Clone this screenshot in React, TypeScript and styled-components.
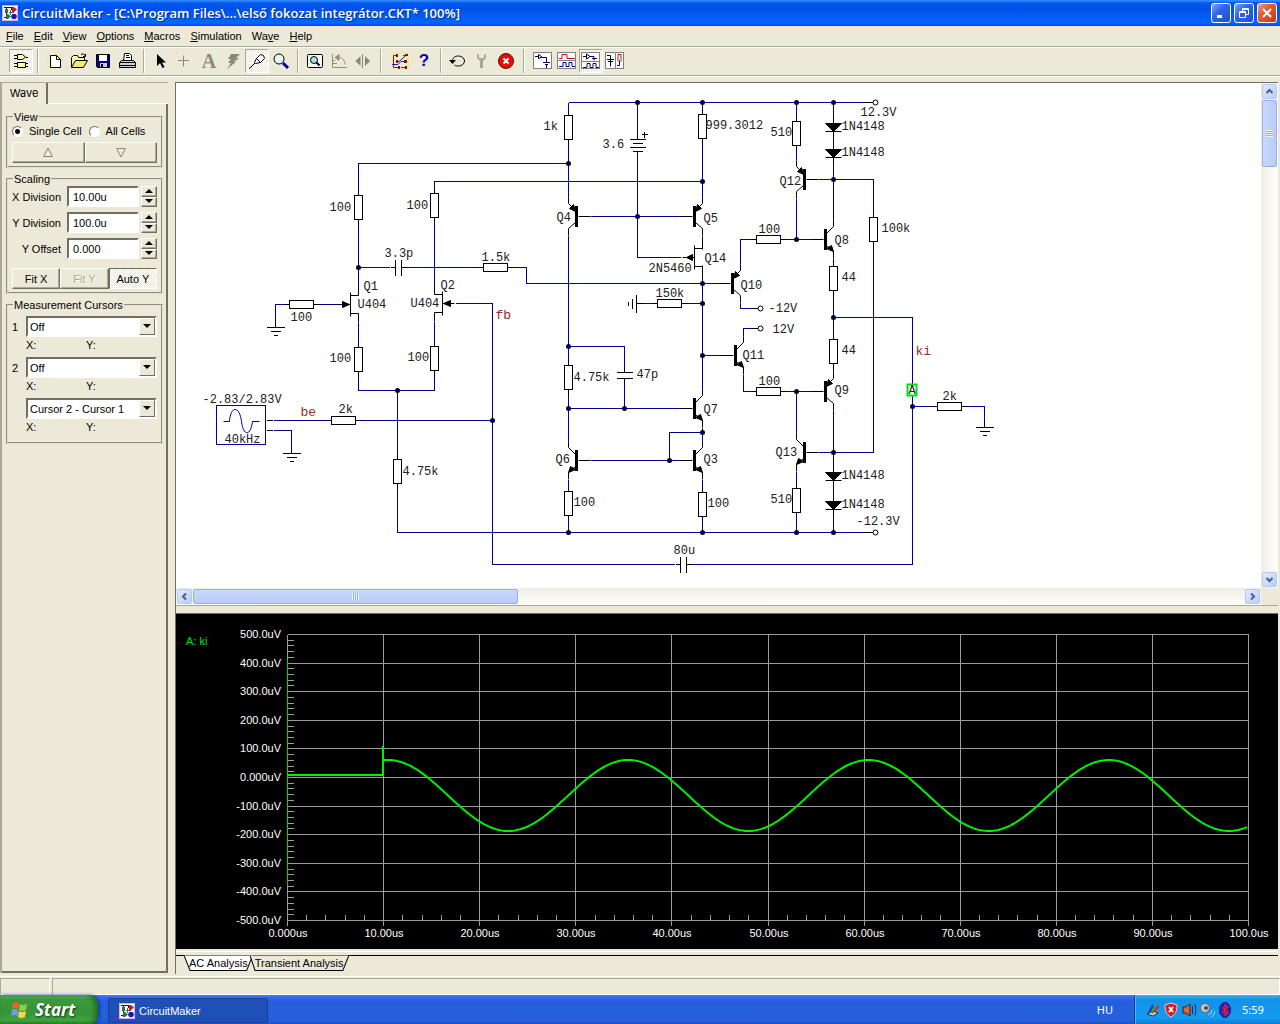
import React from "react";
import styled, { createGlobalStyle, css } from "styled-components";

const FACE = "#ece9d8";
const SHADE = "#aca899";
const DARK = "#716f64";
const WIRE = "#000094";
const UI_FONT = '"Liberation Sans", Arial, sans-serif';
const TAHOMA = '"Noto Sans", Tahoma, sans-serif';

const Global = createGlobalStyle`
  * { box-sizing: border-box; }
  body { margin: 0; background: ${FACE}; font: 11px/14px ${UI_FONT}; color: #000; }
  button, input, select { font: inherit; color: inherit; margin: 0; }
`;

const checker = css`
  background: repeating-conic-gradient(#fff 0 25%, ${FACE} 0 50%) 0 0 / 2px 2px;
`;

const Window = styled.div`
  display: flex;
  flex-direction: column;
  min-height: 100vh;
`;

/* ---------- title bar ---------- */

const TitleBar = styled.header`
  display: flex;
  align-items: center;
  height: 26px;
  padding: 0 3px 0 2px;
  background: linear-gradient(180deg, #3a93ff 0, #0058ee 12%, #0050e6 35%, #0062fa 75%, #0066ff 90%, #0046d8 100%);
`;

const Title = styled.h1`
  flex: 1;
  margin: 0 0 0 4px;
  font: 600 13px/18px "Open Sans", "Trebuchet MS", sans-serif;
  color: #fff;
  text-shadow: 1px 1px 1px #00308c;
  white-space: nowrap;
  overflow: hidden;
`;

const Caption = styled.div`
  display: flex;
  gap: 3px;
`;

const CaptionButton = styled.button<{ $close?: boolean }>`
  display: flex;
  width: 20px;
  height: 20px;
  padding: 0;
  align-items: center;
  justify-content: center;
  border: 1px solid #fff;
  border-radius: 3px;
  background: ${(p) =>
    p.$close
      ? "linear-gradient(135deg, #f0a083 0, #e25a32 40%, #c6391a 100%)"
      : "linear-gradient(135deg, #7fa6f8 0, #2f66e6 40%, #1c4fd0 100%)"};
`;

/* ---------- menu and toolbar ---------- */

const MenuBar = styled.nav`
  display: flex;
  gap: 10px;
  height: 20px;
  padding: 0 6px;
  align-items: center;
`;

const MenuItem = styled.button`
  padding: 0;
  border: 0;
  background: none;
  font: 11px/14px ${UI_FONT};
`;

const ToolBar = styled.div`
  display: flex;
  align-items: center;
  height: 30px;
  padding-left: 9px;
  border-top: 1px solid ${SHADE};
  border-bottom: 1px solid ${SHADE};
  box-shadow: inset 0 1px #fff, 0 1px #fff;
`;

const ToolButton = styled.button<{ $down?: boolean }>`
  display: flex;
  width: 24px;
  height: 24px;
  padding: 0;
  align-items: center;
  justify-content: center;
  border: 1px solid transparent;
  background: none;
  ${(p) =>
    p.$down &&
    css`
      ${checker}
      border-color: ${SHADE} #fff #fff ${SHADE};
    `}
`;

const ToolGap = styled.span<{ $wide?: boolean }>`
  width: 2px;
  height: 24px;
  margin: 0 ${(p) => (p.$wide ? 6 : 4)}px 0 ${(p) => (p.$wide ? 5 : 4)}px;
  border-left: 1px solid ${SHADE};
  border-right: 1px solid #fff;
`;

/* ---------- wave panel ---------- */

const Body = styled.div`
  display: flex;
  flex: 1;
  min-height: 0;
  padding-top: 6px;
`;

const Side = styled.aside`
  display: flex;
  flex-direction: column;
  width: 168px;
  margin: 0 7px 3px 0;
  border-left: 2px solid ${SHADE};
  border-top: 1px solid ${SHADE};
`;

const SideTabs = styled.div`
  display: flex;
  height: 21px;
`;

const SideTab = styled.button`
  width: 46px;
  padding: 0 0 1px;
  border: 0;
  border-right: 2px solid ${DARK};
  background: none;
  font: 11px/14px "Inter", ${UI_FONT};
`;

const TabRest = styled.span`
  flex: 1;
  border-bottom: 1px solid #fff;
`;

const SidePage = styled.div`
  flex: 1;
  padding: 6px 3px 0 4px;
  border-right: 2px solid ${DARK};
  border-bottom: 2px solid ${DARK};
`;

const Group = styled.fieldset`
  min-width: 0;
  margin: 0 0 4px;
  padding: 0 4px 3px;
  border: 2px groove #e4e0d0;
`;

const Legend = styled.legend`
  margin-left: 1px;
  padding: 0 1px;
  height: 14px;
`;

const RadioRow = styled.div`
  display: flex;
  gap: 7px;
`;

const RadioLabel = styled.label`
  display: flex;
  align-items: center;
  gap: 6px;
  white-space: nowrap;
`;

const Radio = styled.input`
  appearance: none;
  width: 11px;
  height: 11px;
  border: 1px solid;
  border-color: ${DARK} #fff #fff ${DARK};
  border-radius: 50%;
  background: #fff;
  &:checked {
    background: radial-gradient(circle, #000 0 2px, #fff 3px);
  }
`;

const ButtonRow = styled.div`
  display: flex;
  padding-top: 4px;
`;

const PushButton = styled.button<{ $down?: boolean }>`
  display: flex;
  flex: 1;
  height: 21px;
  padding: 0;
  align-items: center;
  justify-content: center;
  border: 1px solid;
  border-color: #fff ${DARK} ${DARK} #fff;
  box-shadow: inset -1px -1px ${SHADE};
  background: ${FACE};
  white-space: nowrap;
  &:disabled {
    color: ${SHADE};
    text-shadow: 1px 1px #fff;
  }
  ${(p) =>
    p.$down &&
    css`
      ${checker}
      border-color: ${DARK} #fff #fff ${DARK};
      box-shadow: none;
    `}
`;

const Field = styled.div`
  display: flex;
  align-items: center;
  height: 21px;
  margin-bottom: 5px;
`;

const FieldLabel = styled.label`
  width: 54px;
  margin-right: 1px;
  padding-right: 5px;
  text-align: right;
  white-space: nowrap;
`;

const Entry = styled.input`
  flex: 1;
  min-width: 0;
  height: 21px;
  padding: 0 4px;
  border: 2px solid;
  border-color: ${DARK} #fff #fff ${DARK};
  background: #fff;
`;

const Spinner = styled.div`
  display: flex;
  flex-direction: column;
  width: 16px;
  height: 21px;
  margin-left: 2px;
`;

const SpinButton = styled(PushButton)`
  height: 10px;
`;

const CursorList = styled.div`
  padding-top: 4px;
`;

const CursorRow = styled.div`
  display: grid;
  grid-template-columns: 14px 1fr;
  align-items: center;
`;

const Combo = styled.div`
  display: grid;
  height: 21px;
  border: 2px solid;
  border-color: ${DARK} #fff #fff ${DARK};
  background: #fff;
  > * {
    grid-area: 1 / 1;
  }
`;

const ComboSelect = styled.select`
  appearance: none;
  width: 100%;
  padding: 0 18px 0 2px;
  border: 0;
  background: none;
`;

const ComboArrow = styled.span`
  display: flex;
  justify-self: end;
  width: 16px;
  align-items: center;
  justify-content: center;
  border: 1px solid;
  border-color: #fff ${DARK} ${DARK} #fff;
  background: ${FACE};
  pointer-events: none;
`;

const Readout = styled.div`
  display: grid;
  grid-template-columns: 60px 1fr;
  height: 20px;
  padding: 1px 0 0 14px;
`;

/* ---------- workspace ---------- */

const Workspace = styled.main`
  display: flex;
  flex: 1;
  min-width: 0;
  flex-direction: column;
  margin: 0 2px 2px 0;
  border-left: 1px solid ${DARK};
  border-top: 1px solid ${DARK};
`;

const SchematicPane = styled.section`
  display: grid;
  flex: 1;
  min-height: 300px;
  grid-template: minmax(0, 1fr) 17px / minmax(0, 1fr) 17px;
  border-bottom: 1px solid ${SHADE};
`;

const Sheet = styled.div`
  overflow: hidden;
  background: #fff;
`;

const Track = styled.div<{ $across?: boolean }>`
  display: flex;
  flex-direction: ${(p) => (p.$across ? "row" : "column")};
  gap: 1px;
  padding: 1px;
  background: ${(p) => `linear-gradient(${p.$across ? 180 : 90}deg, #eeede5, #fefefb)`};
`;

const ScrollButton = styled.button`
  display: flex;
  flex: none;
  width: 15px;
  height: 15px;
  padding: 0;
  align-items: center;
  justify-content: center;
  border: 1px solid #b4c8f0;
  border-radius: 2px;
  background: linear-gradient(135deg, #e1eafe, #b9cdfa);
`;

const Thumb = styled.div<{ $across?: boolean }>`
  display: flex;
  flex: ${(p) => (p.$across ? "0 0 30%" : "0 0 67px")};
  margin-${(p) => (p.$across ? "right" : "bottom")}: auto;
  align-items: center;
  justify-content: center;
  border: 1px solid #98b0e8;
  border-radius: 2px;
  background: linear-gradient(${(p) => (p.$across ? 180 : 90)}deg, #c9d8fc, #b9cbf8);
`;

const Grip = styled.span<{ $across?: boolean }>`
  width: 7px;
  height: 7px;
  background: repeating-linear-gradient(${(p) => (p.$across ? 90 : 180)}deg, #eef4fe 0 1px, #8cb0f8 1px 2px);
`;

const WavePane = styled.section`
  margin-top: 7px;
  border-top: 1px solid ${DARK};
  background: #000;
`;

const Drawing = styled.svg<{ $fluid?: boolean }>`
  display: block;
  ${(p) => p.$fluid && "width: 100%; height: auto;"}
`;

const SheetTabs = styled.div`
  display: flex;
  height: 23px;
  margin-top: 2px;
  border-top: 1px solid #fff;
`;

const TabStrip = styled.div`
  display: flex;
  flex: 1;
  margin-top: 3px;
  padding-left: 8px;
  border-top: 1px solid #000;
`;

const SheetTab = styled.button`
  display: grid;
  height: 16px;
  margin: -1px -3px 0 0;
  padding: 0;
  border: 0;
  background: none;
  line-height: 16px;
  > * {
    grid-area: 1 / 1;
  }
`;

const TabShape = styled.svg`
  width: 100%;
  height: 16px;
`;

const TabText = styled.span`
  padding: 0 5px;
`;

/* ---------- status bar and taskbar ---------- */

const StatusBar = styled.footer`
  display: flex;
  gap: 2px;
  height: 19px;
  padding-top: 1px;
  border-top: 1px solid #fff;
`;

const StatusCell = styled.div<{ $width?: number }>`
  flex: ${(p) => (p.$width ? `0 0 ${p.$width}px` : "1")};
  border: 1px solid;
  border-color: ${SHADE} #fff #fff ${SHADE};
`;

const TaskBar = styled.div`
  display: flex;
  height: 30px;
  align-items: stretch;
  color: #fff;
  font: 11px/14px ${TAHOMA};
  background: linear-gradient(180deg, #3c81f3 0, #2a69e8 10%, #245edb 25%, #2561de 85%, #1d4bb8 100%);
`;

const StartButton = styled.button`
  display: flex;
  align-items: center;
  gap: 6px;
  width: 98px;
  padding: 0 0 0 10px;
  border: 0;
  border-radius: 0 10px 10px 0;
  background: linear-gradient(180deg, #6fb86a 0, #3c9a3c 15%, #369336 60%, #3fa53f 85%, #2a7a2a 100%);
  box-shadow: inset -3px 0 5px #1f6a1f, 2px 0 3px #16409c;
  font: italic 700 17px/20px "Open Sans", "Trebuchet MS", sans-serif;
  text-shadow: 1px 1px 2px #143c14;
`;

const TaskButton = styled.button`
  display: flex;
  align-items: center;
  gap: 4px;
  width: 160px;
  margin: 3px auto 2px 10px;
  padding: 0 10px;
  border: 1px solid #173f96;
  border-radius: 2px;
  background: #1e50b8;
  font: 11px/14px ${UI_FONT};
`;

const Language = styled.span`
  align-self: center;
  margin-right: 21px;
`;

const Tray = styled.div`
  display: flex;
  align-items: center;
  gap: 2px;
  width: 146px;
  padding-left: 10px;
  border-left: 1px solid #0a3a8c;
  background: linear-gradient(180deg, #35b5f5 0, #1590ea 15%, #129bf0 75%, #0f77d0 100%);
  box-shadow: inset 1px 0 #3cc0f8;
`;

const Clock = styled.time`
  margin-left: 7px;
`;

/* ---------- icons ---------- */

const Icon = ({ children, size = 20 }: { children: React.ReactNode; size?: number }) => (
  <svg width={size} height={size} viewBox={`0 0 ${size} ${size}`} fill="none" stroke="#000" aria-hidden="true">
    {children}
  </svg>
);

const AppLogo = () => (
  <Icon size={16}>
    <rect x="0" y="0" width="16" height="16" fill="#fff" stroke="none" />
    <path d="M.5.5h15v15H.5z" stroke="#e8a8e8" />
    <path d="M2 2.500h8M4.500 2v11M2 12.500h4M9.500 2v3" stroke="#202020" />
    <rect x="3" y="4" width="3" height="4" fill="#207858" stroke="none" />
    <path d="M10 2h2l3 2.500L12 7h-2z" fill="#d01818" stroke="none" />
    <path d="M4 9h2l3 2.500L6 14H4z" fill="#108040" stroke="none" />
    <circle cx="12" cy="11.500" r="2.800" fill="#1818b0" stroke="none" />
    <path d="M8.500 5v5M7 7.500h5" stroke="#606060" />
  </Icon>
);

const Gate = () => (
  <Icon>
    <path d="M6.500 3.500h5l3 2.500-3 2.500h-5zM6.500 11.500h8v5h-8z" fill="#ffffa0" />
    <path d="M3 4.500h3M3 7.500h3M15 6.500h2M3 12.500h3M3 15.500h3M15 12.500h2M15 15.500h2" />
  </Icon>
);
const NewDoc = () => (
  <Icon>
    <path d="M3 3l14 14M17 3L3 17M10 1v18M2 10h16" stroke="#f6f000" />
    <path d="M5.500 4.500h6l4 4v8h-10z" fill="#fff" />
    <path d="M11.500 4.500v4h4" />
  </Icon>
);
const OpenDoc = () => (
  <Icon>
    <path d="M2.500 16V6.500l2-2h4l1 2h6v3" fill="#ffff98" />
    <path d="M2.500 16.500l4-7h12l-4 7z" fill="#f2ea70" />
    <path d="M12 3.500c2-1 3.500-.5 4.500 1.500m0-2v2.500h-2.500" />
  </Icon>
);
const Save = () => (
  <Icon>
    <path d="M3.500 3.500h13v13h-12l-1-1z" fill="#000080" />
    <rect x="6" y="4" width="8" height="6" fill="#fff" stroke="none" />
    <rect x="7" y="12" width="7" height="4" fill="#c8c8d8" stroke="none" />
    <rect x="8" y="13" width="2" height="3" fill="#000" stroke="none" />
  </Icon>
);
const Print = () => (
  <Icon>
    <path d="M6.500 9.500l1-7h5l2 2v5" fill="#fff" />
    <path d="M9 4.500h3M9 6.500h4" />
    <path d="M2.500 11.500l2-2h12l2 2v5h-16z" fill="#d0d0d0" />
    <path d="M3 11.500h15M3 14.500h15" />
  </Icon>
);
const Arrow = () => (
  <Icon>
    <path d="M6 3v12l3-3 2.500 5 2-1-2.500-4.500h4z" fill="#000" stroke="none" />
  </Icon>
);
const Plus = () => (
  <Icon>
    <path d="M8.500 4.500v11M3 9.500h11" stroke="#8c8a80" />
  </Icon>
);
const LetterA = styled.span`
  font: 700 20px/20px "Liberation Serif", serif;
  color: #8a887e;
`;
const Bolt = () => (
  <Icon>
    <path d="M8 3h9l-4 4h3l-5 4h2l-9 7 4-6H5l3-4H5z" fill="#8a887e" stroke="none" />
  </Icon>
);
const Probe = () => (
  <Icon>
    <path d="M9.500 7.500l4-4 3 1 1 3-4 4-5 1-1-1z" fill="#fff" />
    <path d="M8 12l-4 4-2 1.500M9.500 7.500l4 4" />
  </Icon>
);
const Lens = () => (
  <Icon>
    <circle cx="8" cy="8" r="5" fill="#e4f8f8" />
    <path d="M12 12l5 5" stroke="#0000a0" strokeWidth="3" />
  </Icon>
);
const PageLens = () => (
  <Icon>
    <rect x="2.500" y="3.500" width="15" height="13" rx="1" fill="#f8f8f0" />
    <circle cx="9" cy="9" r="3.500" fill="#a8e0e0" />
    <path d="M11.500 11.500l3 3" strokeWidth="2" />
  </Icon>
);
const Rotate = () => (
  <Icon>
    <g stroke="#918f84">
      <path d="M3.500 3v13.500H18M8 6.500c5-1 8 3 8 7M4 9.500h2M4 12.500h4" />
      <path d="M6 6.500l4-3v6z" fill="#918f84" />
    </g>
  </Icon>
);
const Mirror = () => (
  <Icon>
    <path d="M9.500 3v14" stroke="#8a887e" />
    <path d="M7.500 5v10l-5-5zM12 5v10l5-5z" fill="#8a887e" stroke="none" />
  </Icon>
);
const Nets = () => (
  <Icon>
    <path d="M3 2h15v15H3z" stroke="#f4e400" strokeDasharray="1 1" />
    <path d="M8 4.500H3.500v12H8M11 16.500h6M13 4.500h4" stroke="#a81010" />
    <path d="M2 13.500h6l3-3h6M7 10.500h2l8-7" stroke="#1020b0" />
    <path d="M6 3h2v3H6zM6 9h2v3H6zM15 3h3v2h-3zM14 9h3v3h-3zM8 15h2v3H8zM15 15h2v3h-2z" fill="#801010" stroke="none" />
  </Icon>
);
const Question = styled.span`
  font: 700 17px/20px "Liberation Sans", sans-serif;
  color: #0000a8;
`;
const Undo = () => (
  <Icon>
    <path d="M4.500 10c0-3.500 3-5 6-5s6 2 6 5-3 5-6 5c-2 0-3 0-4-1" />
    <path d="M1 9h7l-3.500 4z" fill="#000" stroke="none" />
  </Icon>
);
const Wrench = () => (
  <Icon>
    <path d="M5 3v4l3 3v7h3v-7l3-3V3l-2 1v3H7V4z" fill="#a8a69a" stroke="none" />
  </Icon>
);
const Stop = () => (
  <Icon>
    <circle cx="10" cy="10" r="7.500" fill="#e80c0c" stroke="#700000" />
    <path d="M7.500 7.500l5 5M12.500 7.500l-5 5" stroke="#fff" strokeWidth="2" />
  </Icon>
);

const Frame = ({ children }: { children: React.ReactNode }) => (
  <Icon>
    <rect x=".5" y="1.500" width="18" height="16" fill="#fff" stroke="#808080" />
    {children}
  </Icon>
);
const ViewCircuit = () => (
  <Frame>
    <path d="M2 5.500h3M9 6.500h4.500v5M10 11.500h7M12 13.500h3M13.500 13v4" stroke="#000060" />
    <path d="M5.500 3.500v4l3.500-1.500z" fill="#fff" />
  </Frame>
);
const ViewWaves = () => (
  <Frame>
    <path d="M2 7.500h3v-4h5v4h8" stroke="#c01010" />
    <path d="M1 9.500h17" stroke="#808080" />
    <path d="M2 15.500h4v-4h3v4h3v-4h3v4h3" stroke="#000090" />
  </Frame>
);
const ViewBoth = () => (
  <Frame>
    <path d="M2 5.500h3M9 5.500h4v4M11 7.500h5" stroke="#000060" />
    <path d="M5.500 3v5l3.500-2.500z" fill="#fff" />
    <path d="M1 10.500h17" stroke="#808080" />
    <path d="M2 16.500h4v-4h3v4h3v-4h3v4h3" stroke="#000090" />
  </Frame>
);
const ViewSplit = () => (
  <Frame>
    <path d="M2 4.500h3.500v11M2 8.500h7M3 10.500h5" stroke="#000060" />
    <path d="M10.500 2v15" stroke="#808080" />
    <path d="M13 10.500v-7h3v7" stroke="#c01010" />
    <path d="M12 14.500h2.500v-5" stroke="#000090" />
  </Frame>
);

const Tri = ({ dir, size = 4 }: { dir: "up" | "down"; size?: number }) => (
  <svg width={size * 2 + 2} height={size + 1} viewBox={`0 0 ${size * 2 + 2} ${size + 1}`} aria-hidden="true">
    <path d={dir === "up" ? `M1 ${size}h${size * 2}L${size + 1} 0z` : `M1 0h${size * 2}L${size + 1} ${size}z`} />
  </svg>
);

const HollowTri = ({ dir }: { dir: "up" | "down" }) => (
  <svg width="12" height="11" viewBox="0 0 12 11" fill="none" stroke="#8a887c" aria-hidden="true">
    <path d={dir === "up" ? "M1.500 9.500h9L6 1z" : "M1.500 1.500h9L6 10z"} />
  </svg>
);

const Chevron = ({ turn }: { turn: number }) => (
  <svg width="9" height="9" viewBox="0 0 9 9" fill="none" stroke="#4d6185" strokeWidth="2" aria-hidden="true">
    <path d="M1.500 6l3-3 3 3" transform={`rotate(${turn} 4.500 4.500)`} />
  </svg>
);

/* ---------- schematic parts ---------- */

type Pt = { x: number; y: number };

const Resistor = ({ x, y, flat }: Pt & { flat?: boolean }) => (
  <g transform={flat ? `translate(${x} ${y}) rotate(-90)` : `translate(${x} ${y})`}>
    <path d="M0-17V17" />
    <rect x="-4" y="-12" width="8" height="24" fill="#fff" />
  </g>
);

const Capacitor = ({ x, y, flat }: Pt & { flat?: boolean }) => (
  <g transform={flat ? `translate(${x} ${y}) rotate(-90)` : `translate(${x} ${y})`}>
    <rect x="-1" y="-3" width="2" height="6" fill="#fff" stroke="none" />
    <path d="M0-8v5M0 3v5M-8-3H8M-8 3H8" />
  </g>
);

const Ground = ({ x, y, left }: Pt & { left?: boolean }) => (
  <path d="M0-7V0M-9 0H9M-5 4H5M-2 8H2" transform={`translate(${x} ${y})${left ? " rotate(90)" : ""}`} />
);

const Diode = ({ x, y }: Pt) => (
  <g transform={`translate(${x} ${y})`}>
    <path d="M0-6V14M-8 8H8" />
    <path d="M-8 0H8L0 8z" fill="#000" />
  </g>
);

/* (x, y) is where the emitter/collector column crosses the base line. */
const Transistor = ({ x, y, right, pnp }: Pt & { right?: boolean; pnp?: boolean }) => (
  <g transform={`translate(${x} ${y}) scale(${right ? 1 : -1} 1)`}>
    <rect x="-1" y="-19" width="2" height="38" fill="#fff" stroke="none" />
    <path d="M0-19v6l7 7M7 6L0 12v7M10 0h12" />
    <rect x="7" y="-10" width="2" height="20" fill="#000" />
    {pnp ? <path d="M7-5L1-8l4-4z" fill="#000" /> : <path d="M0 12l2-6 5 3z" fill="#000" />}
  </g>
);

const Jfet = ({ x, y, right, out }: Pt & { right?: boolean; out?: boolean }) => (
  <g transform={`translate(${x} ${y}) scale(${right ? 1 : -1} 1)`}>
    <rect x="-1" y="-8" width="2" height="16" fill="#fff" stroke="none" />
    <path d="M0-18v9h8M0 18V9h8M8-12V12M8 0h12" />
    {out ? <path d="M16 0L10-3v6z" fill="#000" /> : <path d="M9 0l7-3v6z" fill="#000" />}
  </g>
);

const wires = [
  "M358 286V163H568M358 267H389M402 267H526V283H720M434 286V181H702",
  "M284 304H275V320M313 304H338M455 303H492V564H674M358 322V390H434V321M397 390V532H875",
  "M273 420H492M273 430H291V446M568 102H875M568 102V198M637 102V134M637 151V257H680",
  "M702 102V198M590 216H681M702 235V391M637 303H702M568 235V441M568 346H624V370M624 380V408",
  "M568 408H681M702 427V441M702 432H669V460M590 460H681M568 479V532M702 479V532",
  "M740 264V239H812M740 302V308H752M743 336V328H752M702 355H721M743 374V391H812",
  "M796 102V160M796 198V239M796 391V433M796 471V532M833 102V220M818 179H873V452H818M833 258V372M833 410V532",
  "M833 317H912V564H687M912 406H984V421",
];

const dots: [number, number][] = [
  [637, 102], [702, 102], [796, 102], [833, 102], [568, 163], [702, 181], [637, 216], [833, 179],
  [358, 267], [702, 283], [702, 303], [796, 239], [833, 317], [568, 346], [702, 355], [397, 390],
  [796, 391], [568, 408], [624, 408], [912, 406], [492, 420], [702, 432], [669, 460], [833, 452],
  [568, 532], [702, 532], [796, 532], [833, 532],
];

const uprights: [number, number][] = [
  [358, 207], [434, 205], [358, 359], [434, 358], [397, 471], [568, 127], [702, 126], [568, 377],
  [568, 503], [702, 504], [796, 133], [833, 278], [873, 229], [833, 351], [796, 500],
];

const flats: [number, number][] = [[495, 267], [301, 304], [343, 420], [669, 303], [768, 239], [768, 391], [949, 406]];

const labels: [number, number, string][] = [
  [329, 210, "100"], [406, 208, "100"], [384, 256, "3.3p"], [481, 260, "1.5k"], [363, 289, "Q1"], [357, 307, "U404"],
  [440, 288, "Q2"], [410, 306, "U404"], [290, 320, "100"], [329, 361, "100"], [407, 360, "100"], [202, 402, "-2.83/2.83V"],
  [224, 442, "40kHz"], [338, 412, "2k"], [402, 474, "4.75k"], [543, 129, "1k"], [602, 147, "3.6"], [705, 128, "999.3012"],
  [556, 220, "Q4"], [703, 221, "Q5"], [704, 261, "Q14"], [648, 271, "2N5460"], [655, 296, "150k"], [740, 288, "Q10"],
  [768, 311, "-12V"], [772, 332, "12V"], [742, 358, "Q11"], [573, 380, "4.75k"], [636, 377, "47p"], [703, 412, "Q7"],
  [555, 462, "Q6"], [703, 462, "Q3"], [573, 505, "100"], [707, 506, "100"], [673, 553, "80u"], [770, 135, "510"],
  [841, 129, "1N4148"], [841, 155, "1N4148"], [860, 115, "12.3V"], [779, 184, "Q12"], [758, 232, "100"], [834, 243, "Q8"],
  [841, 280, "44"], [881, 231, "100k"], [841, 353, "44"], [758, 384, "100"], [834, 393, "Q9"], [775, 455, "Q13"],
  [770, 502, "510"], [841, 478, "1N4148"], [841, 507, "1N4148"], [856, 524, "-12.3V"], [942, 399, "2k"],
];

const PartText = styled.text<{ $net?: boolean }>`
  font: ${(p) => (p.$net ? 13 : 12)}px "Liberation Mono", "Courier New", monospace;
  fill: ${(p) => (p.$net ? "#a02828" : "#202020")};
  stroke: none;
`;

const Schematic = () => (
  <Drawing width="1085" height="505" viewBox="176 83 1085 505" role="img" aria-label="Circuit schematic">
    <g transform="translate(.5 .5)" fill="none" stroke="#000">
      <g stroke={WIRE} shapeRendering="crispEdges">
        {wires.map((d) => (
          <path key={d} d={d} />
        ))}
        <rect x="216" y="405" width="49" height="39" stroke="#0000a8" />
      </g>
      <path d="M223 421h6c1-16 10-16 12 0c2 15 9 15 11 0h7" stroke={WIRE} />
      <path d="M266 420h6M266 430h6" shapeRendering="crispEdges" />
      <g shapeRendering="crispEdges">
        {uprights.map(([x, y]) => <Resistor key={`${x}-${y}`} x={x} y={y} />)}
        {flats.map(([x, y]) => <Resistor key={`${x}-${y}`} x={x} y={y} flat />)}
        <Capacitor x={398} y={267} flat />
        <Capacitor x={683} y={564} flat />
        <Capacitor x={624} y={375} />
        <Ground x={275} y={327} />
        <Ground x={291} y={453} />
        <Ground x={984} y={427} />
        <Ground x={636} y={303} left />
        <path d="M637 134v5M629 139h16M632 143h10M629 147h16M632 151h10M641 134h6M644 131v6" />
      </g>
      <Diode x={833} y={123} />
      <Diode x={833} y={149} />
      <Diode x={833} y={472} />
      <Diode x={833} y={501} />
      <Transistor x={568} y={216} right pnp />
      <Transistor x={702} y={216} pnp />
      <Transistor x={740} y={283} pnp />
      <Transistor x={796} y={179} right pnp />
      <Transistor x={833} y={391} pnp />
      <Transistor x={702} y={408} />
      <Transistor x={702} y={460} />
      <Transistor x={568} y={460} right />
      <Transistor x={833} y={239} />
      <Transistor x={743} y={355} />
      <Transistor x={796} y={452} right />
      <Jfet x={358} y={304} />
      <Jfet x={434} y={303} right />
      <Jfet x={702} y={257} out />
      {dots.map(([x, y]) => <circle key={`${x}-${y}`} cx={x} cy={y} r="2.500" fill="#000030" stroke="none" />)}
      {[[875, 102], [760, 308], [760, 328], [875, 532]].map(([x, y]) => (
        <g key={`${x}-${y}`}>
          <path d={`M${x - 9} ${y}h7`} />
          <circle cx={x} cy={y} r="2.500" fill="#fff" />
        </g>
      ))}
      <rect x="907" y="384" width="9" height="11" fill="#fff" stroke="#00e010" strokeWidth="2" />
      <PartText x="908" y="393">A</PartText>
      {labels.map(([x, y, s]) => <PartText key={`${x}-${y}`} x={x} y={y}>{s}</PartText>)}
      <PartText $net x="495" y="318">fb</PartText>
      <PartText $net x="300" y="415">be</PartText>
      <PartText $net x="915" y="354">ki</PartText>
    </g>
  </Drawing>
);

/* ---------- wave chart ---------- */

const X0 = 111;
const X1 = 1072;
const Y0 = 20;
const Y1 = 306;
const steps = Array.from({ length: 11 }, (_, i) => i);
const gx = (i: number) => Math.round(X0 + ((X1 - X0) * i) / 10);
const gy = (i: number) => Math.round(Y0 + ((Y1 - Y0) * i) / 10);
const minor = Array.from({ length: 51 }, (_, i) => i / 5);
const yNames = ["500.0uV", "400.0uV", "300.0uV", "200.0uV", "100.0uV", "0.000uV", "-100.0uV", "-200.0uV", "-300.0uV", "-400.0uV", "-500.0uV"];
const xNames = ["0.000us", "10.00us", "20.00us", "30.00us", "40.00us", "50.00us", "60.00us", "70.00us", "80.00us", "90.00us", "100.0us"];

const trace =
  "M111 161H207V132V146" +
  Array.from({ length: 433 }, (_, i) => {
    const x = 207 + i * 2;
    return `L${x} ${(181.5 - 35.5 * Math.cos(((x - 212) * 2 * Math.PI) / 240.25)).toFixed(1)}`;
  }).join("");

const AxisText = styled.text`
  font: 11px ${UI_FONT};
  fill: #fff;
`;

const KeyText = styled(AxisText)`
  fill: #00e000;
`;

const Chart = () => (
  <Drawing $fluid viewBox="0 0 1102 335" role="img" aria-label="Transient analysis of node ki">
    <g transform="translate(.5 .5)" fill="none" stroke="#9c9c9c" shapeRendering="crispEdges">
      {steps.map((i) => <path key={i} d={`M${gx(i)} ${Y0}V${Y1 + 5}M${X0} ${gy(i)}H${X1}`} />)}
      {minor.map((i) => <path key={i} d={`M${X0} ${gy(i)}h6M${gx(i)} ${Y1}v-6`} />)}
    </g>
    <path d="M111.500 46V272" stroke="#00d800" />
    <path d={trace} fill="none" stroke="#00f000" strokeWidth="2" />
    {yNames.map((s, i) => <AxisText key={s} x="105" y={gy(i) + 4} textAnchor="end">{s}</AxisText>)}
    {xNames.map((s, i) => <AxisText key={s} x={gx(i) + 1} y="323" textAnchor="middle">{s}</AxisText>)}
    <KeyText x="10" y="31">A: ki</KeyText>
  </Drawing>
);

/* ---------- page ---------- */

const menus: [string, number][] = [
  ["File", 0], ["Edit", 0], ["View", 0], ["Options", 0], ["Macros", 0], ["Simulation", 0], ["Wave", 2], ["Help", 0],
];

type Tool = { name: string; icon: React.ReactNode; down?: boolean };
type ToolSet = { wide?: boolean; tools: Tool[] };
const toolSets: ToolSet[] = [
  { tools: [{ name: "Parts", icon: <Gate />, down: true }] },
  {
    tools: [
      { name: "New", icon: <NewDoc /> },
      { name: "Open", icon: <OpenDoc /> },
      { name: "Save", icon: <Save /> },
      { name: "Print", icon: <Print /> },
    ],
  },
  {
    tools: [
      { name: "Arrow", icon: <Arrow /> },
      { name: "Wire", icon: <Plus /> },
      { name: "Text", icon: <LetterA>A</LetterA> },
      { name: "Delete", icon: <Bolt /> },
      { name: "Probe", icon: <Probe />, down: true },
      { name: "Zoom", icon: <Lens /> },
    ],
  },
  {
    tools: [
      { name: "Fit", icon: <PageLens /> },
      { name: "Rotate", icon: <Rotate /> },
      { name: "Mirror", icon: <Mirror /> },
    ],
  },
  {
    wide: true,
    tools: [
      { name: "Digital or analog", icon: <Nets /> },
      { name: "Help", icon: <Question>?</Question> },
    ],
  },
  {
    tools: [
      { name: "Reset", icon: <Undo /> },
      { name: "Step", icon: <Wrench /> },
      { name: "Stop", icon: <Stop /> },
    ],
  },
  {
    wide: true,
    tools: [
      { name: "Circuit only", icon: <ViewCircuit /> },
      { name: "Waves only", icon: <ViewWaves /> },
      { name: "Split across", icon: <ViewBoth />, down: true },
      { name: "Split down", icon: <ViewSplit /> },
    ],
  },
];

const NumberField = ({ id, label, value }: { id: string; label: string; value: string }) => (
  <Field>
    <FieldLabel htmlFor={id}>{label}</FieldLabel>
    <Entry id={id} defaultValue={value} />
    <Spinner>
      <SpinButton aria-label={`${label} up`}><Tri dir="up" /></SpinButton>
      <SpinButton aria-label={`${label} down`}><Tri dir="down" /></SpinButton>
    </Spinner>
  </Field>
);

const CursorPicker = ({ id, label, name, value }: { id: string; label: string; name: string; value: string }) => (
  <>
    <CursorRow>
      <label htmlFor={id}>{label}</label>
      <Combo>
        <ComboSelect id={id} aria-label={name}>
          <option>{value}</option>
        </ComboSelect>
        <ComboArrow><Tri dir="down" /></ComboArrow>
      </Combo>
    </CursorRow>
    <Readout>
      <span>X:</span>
      <span>Y:</span>
    </Readout>
  </>
);

export default function App() {
  return (
    <Window>
      <Global />
      <TitleBar>
        <AppLogo />
        <Title>CircuitMaker - [C:\Program Files\...\első fokozat integrátor.CKT* 100%]</Title>
        <Caption>
          <CaptionButton aria-label="Minimize">
            <Icon size={14}><path d="M3 10.500h5" stroke="#fff" strokeWidth="3" /></Icon>
          </CaptionButton>
          <CaptionButton aria-label="Restore">
            <Icon size={14}><path d="M5.500 5V2.500h6v6H9M2.500 5.500h6v6h-6zM2.500 6.500h6M5.500 3.500h6" stroke="#fff" /></Icon>
          </CaptionButton>
          <CaptionButton $close aria-label="Close">
            <Icon size={14}><path d="M3 3l8 8M11 3l-8 8" stroke="#fff" strokeWidth="2" /></Icon>
          </CaptionButton>
        </Caption>
      </TitleBar>

      <MenuBar>
        {menus.map(([m, k]) => (
          <MenuItem key={m}>{m.slice(0, k)}<u>{m[k]}</u>{m.slice(k + 1)}</MenuItem>
        ))}
      </MenuBar>

      <ToolBar>
        {toolSets.map((set, i) => (
          <React.Fragment key={i}>
            {i > 0 && <ToolGap $wide={set.wide} />}
            {set.tools.map((t) => (
              <ToolButton key={t.name} $down={t.down} aria-label={t.name}>{t.icon}</ToolButton>
            ))}
          </React.Fragment>
        ))}
      </ToolBar>

      <Body>
        <Side>
          <SideTabs>
            <SideTab>Wave</SideTab>
            <TabRest />
          </SideTabs>
          <SidePage>
            <Group>
              <Legend>View</Legend>
              <RadioRow>
                <RadioLabel><Radio type="radio" name="cells" defaultChecked />Single Cell</RadioLabel>
                <RadioLabel><Radio type="radio" name="cells" />All Cells</RadioLabel>
              </RadioRow>
              <ButtonRow>
                <PushButton aria-label="Previous cell"><HollowTri dir="up" /></PushButton>
                <PushButton aria-label="Next cell"><HollowTri dir="down" /></PushButton>
              </ButtonRow>
            </Group>
            <Group>
              <Legend>Scaling</Legend>
              <NumberField id="xdiv" label="X Division" value="10.00u" />
              <NumberField id="ydiv" label="Y Division" value="100.0u" />
              <NumberField id="yoff" label="Y Offset" value="0.000" />
              <ButtonRow>
                <PushButton>Fit X</PushButton>
                <PushButton disabled>Fit Y</PushButton>
                <PushButton $down>Auto Y</PushButton>
              </ButtonRow>
            </Group>
            <Group>
              <Legend>Measurement Cursors</Legend>
              <CursorList>
                <CursorPicker id="c1" label="1" name="Cursor 1" value="Off" />
                <CursorPicker id="c2" label="2" name="Cursor 2" value="Off" />
                <CursorPicker id="diff" label="" name="Cursor difference" value="Cursor 2 - Cursor 1" />
              </CursorList>
            </Group>
          </SidePage>
        </Side>

        <Workspace>
          <SchematicPane>
            <Sheet><Schematic /></Sheet>
            <Track>
              <ScrollButton aria-label="Scroll up"><Chevron turn={0} /></ScrollButton>
              <Thumb><Grip /></Thumb>
              <ScrollButton aria-label="Scroll down"><Chevron turn={180} /></ScrollButton>
            </Track>
            <Track $across>
              <ScrollButton aria-label="Scroll left"><Chevron turn={-90} /></ScrollButton>
              <Thumb $across><Grip $across /></Thumb>
              <ScrollButton aria-label="Scroll right"><Chevron turn={90} /></ScrollButton>
            </Track>
          </SchematicPane>
          <WavePane><Chart /></WavePane>
          <SheetTabs>
            <TabStrip>
              <SheetTab>
                <TabShape viewBox="0 0 68 16" preserveAspectRatio="none">
                  <path d="M0 .5L6 15.500H62L68 .5" fill="#fff" stroke="#000" />
                </TabShape>
                <TabText>AC Analysis</TabText>
              </SheetTab>
              <SheetTab>
                <TabShape viewBox="0 0 98 16" preserveAspectRatio="none">
                  <path d="M0 .5L5 15.500H92L98 .5" fill={FACE} stroke="#000" />
                </TabShape>
                <TabText>Transient Analysis</TabText>
              </SheetTab>
            </TabStrip>
          </SheetTabs>
        </Workspace>
      </Body>

      <StatusBar>
        <StatusCell $width={50} />
        <StatusCell />
      </StatusBar>

      <TaskBar>
        <StartButton>
          <svg width="19" height="18" viewBox="0 0 19 18" aria-hidden="true">
            <path d="M3 2q3-2 6 0L8 8Q5 6 2 8z" fill="#f0602c" />
            <path d="M10 3q3 2 7 0l-1 6q-4 2-7 0z" fill="#8cd048" />
            <path d="M2 9q3-2 6 0l-1 6q-3-2-6 0z" fill="#6c9cf4" />
            <path d="M9 10q3 2 7 0l-1 6q-4 2-7 0z" fill="#fcd444" />
          </svg>
          Start
        </StartButton>
        <TaskButton><AppLogo />CircuitMaker</TaskButton>
        <Language>HU</Language>
        <Tray>
          <Icon size={16}>
            <path d="M2 12l6-3 5 2-5 3z" fill="#d8d8d8" stroke="#303030" />
            <path d="M7 11l7-7" stroke="#e02020" strokeWidth="2" />
            <path d="M6 11l5-8" stroke="#18b030" strokeWidth="2" />
            <path d="M4 11l4-8" stroke="#2030d0" strokeWidth="2" />
          </Icon>
          <Icon size={16}>
            <path d="M8 1l6 2c0 6-1 9-6 12C3 12 2 9 2 3z" fill="#d81c24" stroke="#f4c8c8" />
            <path d="M6 5l4 5M10 5l-4 5" stroke="#fff" strokeWidth="2" />
          </Icon>
          <Icon size={16}>
            <path d="M2 5h3l4-3v12l-4-3H2z" fill="#e06838" stroke="#481808" />
            <path d="M11.500 4v8M14 2.500c1 3 1 8 0 11" stroke="#202850" />
          </Icon>
          <Icon size={16}>
            <circle cx="6" cy="6" r="4.500" fill="#c8c8c8" stroke="#686868" />
            <circle cx="7" cy="6" r="2" fill="#505050" stroke="none" />
            <path d="M9 13q4-1 4-5M12 15q4-2 4-6" stroke="#a8d4f8" />
          </Icon>
          <Icon size={16}>
            <ellipse cx="8" cy="8" rx="5.500" ry="7.500" fill="#1428c8" stroke="#0c1880" />
            <path d="M5 5l6 6-3 2.500v-11L11 5l-6 6" stroke="#e01c2c" strokeWidth="1.500" />
          </Icon>
          <Clock>5:59</Clock>
        </Tray>
      </TaskBar>
    </Window>
  );
}
